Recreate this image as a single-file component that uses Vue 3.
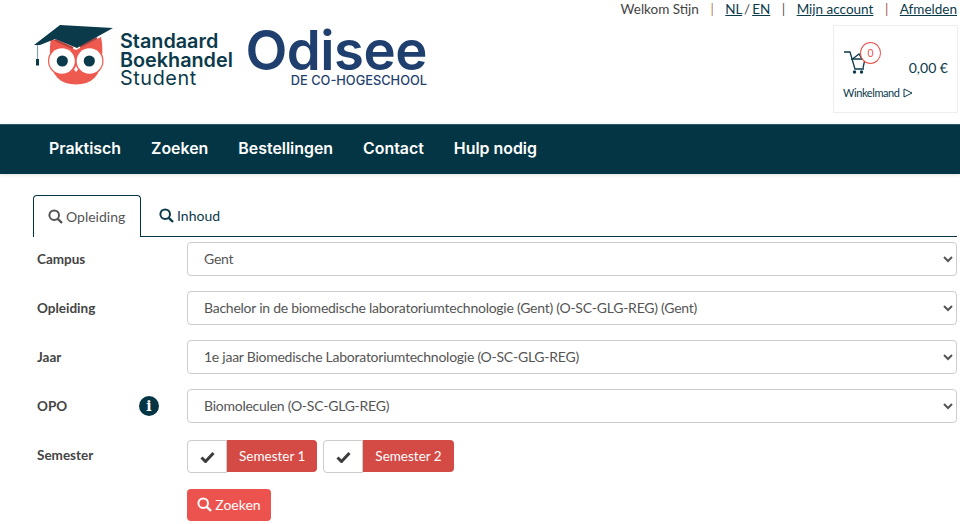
<script setup>
const selects = [
  { label: 'Campus', value: 'Gent' },
  { label: 'Opleiding', value: 'Bachelor in de biomedische laboratoriumtechnologie (Gent) (O-SC-GLG-REG) (Gent)' },
  { label: 'Jaar', value: '1e jaar Biomedische Laboratoriumtechnologie (O-SC-GLG-REG)' },
  { label: 'OPO', value: 'Biomoleculen (O-SC-GLG-REG)', info: true },
]
const nav = ['Praktisch', 'Zoeken', 'Bestellingen', 'Contact', 'Hulp nodig']
</script>

<template>
  <div class="page">
    <header class="header">
      <div class="logos">
        <svg class="owl" width="85" height="65" viewBox="33 24 85 65">
          <circle cx="62" cy="61" r="14" fill="#ee5a50"/>
          <circle cx="89.500" cy="61" r="14" fill="#ee5a50"/>
          <path d="M51 38 L76 50 L101 37 Q103 46 102 58 Q100 84.500 76 84.500 Q52 84.500 50 58 Q49.500 46 51 38Z" fill="#ee5a50"/>
          <circle cx="62" cy="61" r="12.800" fill="#fff"/>
          <circle cx="89.500" cy="61" r="12.800" fill="#fff"/>
          <circle cx="62.300" cy="61" r="5.600" fill="#0b3a4b"/>
          <circle cx="89.300" cy="61" r="5.600" fill="#0b3a4b"/>
          <path d="M76 66 l2 3.500 -2 2.500 -2 -2.500z" fill="#fff"/>
          <path d="M55 40 L73 48 M97 38 L80 47" fill="none" stroke="#b63f3a" stroke-width="2.200"/>
          <path d="M34 45 L60 25 L113 28 L77 48 L55 39 L40 45Z" fill="#0b3a4b"/>
          <path d="M37.500 45 V60" stroke="#8aa0a8" stroke-width="1.200"/>
          <rect x="36" y="59" width="3" height="6.500" fill="#0b3a4b"/>
        </svg>
        <div class="brand">
          <strong>Standaard</strong>
          <strong>Boekhandel</strong>
          <span>Student</span>
        </div>
        <div class="odisee">
          <span class="odisee-name">Odisee</span>
          <span class="odisee-sub">DE CO-HOGESCHOOL</span>
        </div>
      </div>
      <div class="toplinks">
        <span>Welkom Stijn</span><i class="orange">|</i>
        <span class="lang"><a>NL</a> / <a>EN</a></span><i>|</i>
        <a>Mijn account</a><i class="red">|</i>
        <a>Afmelden</a>
      </div>
      <div class="cart">
        <div class="cart-top">
          <div class="cart-icon">
            <svg width="24" height="24" viewBox="0 0 24 24" fill="none" stroke="#0b3a4b" stroke-width="1.300">
              <path d="M0 1 H6 L11 18 H20"/>
              <path d="M7 8 H21 L19 17"/>
              <path d="M8.500 8 L15 3 L18 8"/>
              <circle cx="10.500" cy="21" r="1.700" fill="#0b3a4b" stroke="none"/>
              <circle cx="17.500" cy="21" r="1.700" fill="#0b3a4b" stroke="none"/>
            </svg>
            <span class="badge">0</span>
          </div>
          <span class="price">0,00 €</span>
        </div>
        <div class="cart-link">
          <span>Winkelmand</span>
          <svg width="10" height="10" viewBox="0 0 10 10" fill="none" stroke="#0b3a4b" stroke-width="1"><path d="M1 1 L9 5 L1 9Z"/></svg>
        </div>
      </div>
    </header>

    <nav class="nav">
      <a v-for="n in nav" :key="n">{{ n }}</a>
    </nav>

    <main class="main">
      <div class="tabs">
        <div class="tab active">
          <svg class="search" width="15" height="15" viewBox="0 0 15 15" fill="none" stroke="currentColor"><circle cx="6.200" cy="6.200" r="4.800" stroke-width="2"/><path d="M9.800 9.800 L14 14" stroke-width="2.400"/></svg>
          Opleiding
        </div>
        <div class="tab second">
          <svg class="search" width="15" height="15" viewBox="0 0 15 15" fill="none" stroke="currentColor"><circle cx="6.200" cy="6.200" r="4.800" stroke-width="2"/><path d="M9.800 9.800 L14 14" stroke-width="2.400"/></svg>
          Inhoud
        </div>
      </div>

      <form class="form" @submit.prevent>
        <div v-for="s in selects" :key="s.label" class="row">
          <label class="label">
            {{ s.label }}
            <span v-if="s.info" class="info">i</span>
          </label>
          <select class="select"><option>{{ s.value }}</option></select>
        </div>
        <div class="row semester-row">
          <label class="label">Semester</label>
          <div class="semesters">
            <div v-for="n in [1, 2]" :key="n" class="sem">
              <span class="check">
                <svg width="15" height="12" viewBox="0 0 15 12"><path d="M1.500 6.500 L5.500 10.500 L13.500 2" fill="none" stroke="#3c3c3c" stroke-width="3"/></svg>
              </span>
              <span class="sem-text">Semester {{ n }}</span>
            </div>
          </div>
        </div>
        <button class="submit" type="button">
          <svg width="15" height="15" viewBox="0 0 15 15" fill="none" stroke="#fff"><circle cx="6.200" cy="6.200" r="4.800" stroke-width="2"/><path d="M9.800 9.800 L14 14" stroke-width="2.400"/></svg>
          Zoeken
        </button>
      </form>
    </main>
  </div>
</template>

<style>
html, body { margin: 0; background: #fff; }
</style>

<style scoped>
.page {
  width: 960px;
  height: 524px;
  overflow: hidden;
  font-family: "Lato", "Liberation Sans", sans-serif;
  font-size: 14px;
  color: #444;
  box-sizing: border-box;
}
.header {
  height: 124px;
  box-sizing: border-box;
  display: grid;
  grid-template-columns: 1fr auto;
  grid-template-rows: 25px auto;
  padding-right: 2px;
}
.logos {
  grid-row: 1 / 3;
  display: flex;
  align-items: flex-start;
  padding: 24px 0 0 33px;
}
.owl { display: block; flex: none; }
.brand {
  display: flex;
  flex-direction: column;
  flex: none;
  width: 125px;
  margin: 8px 0 0 2px;
  font-family: "Inter", sans-serif;
  font-size: 19.800px;
  line-height: 18.700px;
  color: #0b3a4b;
}
.brand strong { font-weight: 600; }
.brand span { font-weight: 400; letter-spacing: 0.6px; }
.odisee {
  display: flex;
  flex-direction: column;
  align-items: flex-end;
  width: 182px;
  padding-top: 1px;
  font-family: "Inter", sans-serif;
  color: #1f3f6e;
}
.odisee-name { font-size: 54.500px; line-height: 50px; font-weight: 600; letter-spacing: -0.5px; }
.odisee-sub { font-size: 12.800px; line-height: 12px; font-weight: 500; }
.toplinks {
  display: flex;
  justify-content: flex-end;
  align-items: flex-start;
  gap: 11.500px;
  padding-right: 1px;
  line-height: 19px;
  color: #444;
  font-size: 13.500px;
}
.lang { word-spacing: -1.5px; }
.toplinks a { color: #0b3a4b; text-decoration: underline; }
.toplinks i { font-style: normal; color: #555; }
.toplinks i.red { color: #a85550; }
.toplinks i.orange { color: #b5805a; }
.cart {
  grid-column: 2;
  width: 125px;
  height: 88px;
  box-sizing: border-box;
  border: 1px solid #eee;
  padding: 25px 9px 0 10px;
  color: #0b3a4b;
  justify-self: end;
}
.cart-top { display: flex; justify-content: space-between; align-items: flex-end; }
.cart-icon { position: relative; width: 24px; height: 24px; }
.cart-icon svg { display: block; }
.badge {
  position: absolute;
  left: 16px;
  top: -9px;
  width: 19px;
  height: 20px;
  border: 1px solid #e8534e;
  border-radius: 50%;
  background: #fff;
  color: #e8534e;
  font-size: 10.500px;
  line-height: 20px;
  text-align: center;
}
.price { font-size: 14px; margin-bottom: -1px; }
.cart-link { display: flex; align-items: center; gap: 3px; margin-top: 11px; font-size: 11px; letter-spacing: -0.4px; line-height: 14px; margin-left: -1px; }
.nav {
  height: 50px;
  background: #033544;
  border-top: 1px solid #2c5866;
  box-sizing: border-box;
  display: flex;
  align-items: center;
  gap: 30px;
  padding: 0 0 2px 49px;
  box-shadow: 0 1px 4px rgba(0,0,0,.12);
}
.nav a { color: #fff; font-family: "Inter", sans-serif; font-size: 15.900px; font-weight: 600; }
.main { padding: 21px 3px 0 33px; }
.tabs {
  display: flex;
  height: 42px;
  box-sizing: border-box;
  border-bottom: 1px solid #033544;
}
.tab {
  height: 42px;
  box-sizing: border-box;
  display: flex;
  align-items: center;
  gap: 3px;
  padding: 0 14px 1px;
  color: #0b3a4b;
  font-size: 14px;
}
.search { flex: none; }
.tab.active {
  width: 108px;
  border: 1px solid #033544;
  border-bottom: 0;
  border-radius: 4px 4px 0 0;
  background: #fff;
  color: #555;
}
.tab.second { margin-left: 4px; }
.form { padding-top: 5px; }
.row {
  display: grid;
  grid-template-columns: 154px 1fr;
  align-items: center;
  margin-bottom: 15px;
}
.label { display: flex; align-items: center; justify-content: space-between; padding: 0 28px 0 4px; font-size: 13.500px; font-weight: 700; color: #444; }
.info {
  width: 20px;
  height: 20px;
  border-radius: 50%;
  background: #033544;
  color: #fff;
  font-family: "DejaVu Serif", serif;
  font-size: 14px;
  font-weight: 700;
  line-height: 20px;
  text-align: center;
}
.select {
  height: 34px;
  width: 100%;
  border: 1px solid #ccc;
  border-radius: 4px;
  background: #fff;
  color: #555;
  padding: 0 6px 2px 12px;
  font: inherit;
  font-size: 14px;
  letter-spacing: -0.25px;
}
.semester-row { margin-top: 17px; margin-bottom: 17px; align-items: start; }
.semester-row .label { padding-top: 7px; }
.semesters { display: flex; gap: 6px; }
.sem { display: flex; height: 32px; }
.check {
  width: 40px;
  height: 33px;
  box-sizing: border-box;
  border: 1px solid #ccc;
  border-radius: 4px 0 0 4px;
  display: flex;
  align-items: center;
  justify-content: center;
}
.sem-text {
  background: #d44a45;
  color: #fff;
  padding: 0 12px;
  line-height: 32px;
  border-radius: 0 4px 4px 0;
  font-size: 13.500px;
}
.submit {
  margin-left: 154px;
  height: 32px;
  width: 84px;
  border: 0;
  border-radius: 4px;
  background: #ec534e;
  color: #fff;
  font: inherit;
  font-size: 14px;
  display: flex;
  align-items: center;
  justify-content: center;
  gap: 3px;
  padding: 0 0 2px;
}
</style>
